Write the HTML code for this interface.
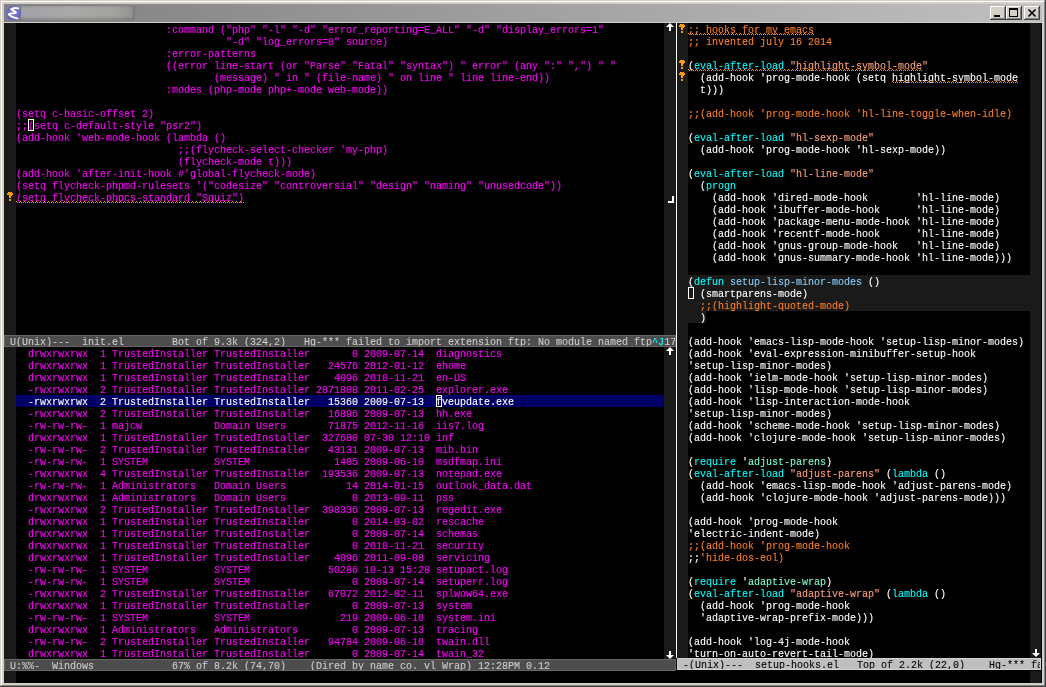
<!DOCTYPE html><html><head><meta charset="utf-8"><style>
html,body{margin:0;padding:0;width:1046px;height:687px;overflow:hidden;background:#d4d0c8}
pre{margin:0}
.t{will-change:transform;-webkit-text-stroke-width:0.1px;position:absolute;font-family:"Liberation Mono",monospace;font-size:10px;line-height:12px;color:#ff00ff;white-space:pre}
.wt{color:#ffffff}
.m{color:#ff00ff}
.hlw{color:#ffffff}
.c{color:#00ffff}
.s{color:#ffa07a}
.f{color:#87cefa}
.k{color:#7fffd4}
.o{color:#ff7f24}
.ml{position:absolute;height:12px;box-sizing:border-box;overflow:hidden}
.mli{background:#4d4d4d;border:1px solid #666666;color:#cccccc}
.mla{background:#bfbfbf;border:1px solid #d2d2d2;color:#000000}
.mlt{will-change:transform;-webkit-text-stroke-width:0.1px;position:absolute;left:-1px;top:1px;font-family:"Liberation Mono",monospace;font-size:10px;line-height:12px;white-space:pre}
</style></head><body><div style="position:absolute;left:0px;top:0px;width:1046px;height:687px;background:#d4d0c8;"></div>
<div style="position:absolute;left:1px;top:1px;width:1044px;height:1px;background:#ffffff;"></div>
<div style="position:absolute;left:1px;top:1px;width:1px;height:685px;background:#ffffff;"></div>
<div style="position:absolute;left:0px;top:686px;width:1046px;height:1px;background:#404040;"></div>
<div style="position:absolute;left:1045px;top:0px;width:1px;height:687px;background:#404040;"></div>
<div style="position:absolute;left:1px;top:685px;width:1044px;height:1px;background:#808080;"></div>
<div style="position:absolute;left:1044px;top:1px;width:1px;height:685px;background:#808080;"></div>
<div style="position:absolute;left:4px;top:4px;width:1038px;height:18px;background:linear-gradient(to right,#808080,#c0c0c0);"></div>
<div style="position:absolute;left:21px;top:6px;width:114px;height:14px;background:linear-gradient(to right,#a2a2a8,#aaaaa8 45%,#a2a2a0 80%,#929290);box-shadow:inset -2px -2px 3px rgba(0,0,0,0.18), inset 0 1px 1px rgba(0,0,0,0.08)"></div>
<svg style="position:absolute;left:5px;top:4px" width="18" height="18" viewBox="0 0 18 18">
<defs><radialGradient id="eg" cx="0.5" cy="0.45" r="0.6"><stop offset="0" stop-color="#8482d0"/><stop offset="0.7" stop-color="#6a68c4"/><stop offset="1" stop-color="#5a58b8"/></radialGradient>
<filter id="eb" x="-20%" y="-20%" width="140%" height="140%"><feGaussianBlur stdDeviation="0.45"/></filter></defs>
<circle cx="8.6" cy="9" r="7.5" fill="url(#eg)"/>
<g filter="url(#eb)">
<path d="M13.2,4.4 C11.5,3.8 8,4.3 6.2,5.2 C7.8,6.6 10.4,7.6 11,8.6 C9.2,9.4 4.8,9.3 3.5,10.2 C5,12.2 9,13.6 12.5,14.4" fill="none" stroke="#ffffff" stroke-width="1.9" stroke-linecap="round" stroke-linejoin="round"/>
</g>
</svg>
<div style="position:absolute;left:990px;top:6px;width:16px;height:14px;background:#404040;"></div><div style="position:absolute;left:990px;top:6px;width:15px;height:13px;background:#ffffff;"></div><div style="position:absolute;left:991px;top:7px;width:14px;height:12px;background:#808080;"></div><div style="position:absolute;left:991px;top:7px;width:13px;height:11px;background:#d4d0c8;"></div><div style="position:absolute;left:994px;top:15px;width:6px;height:2px;background:#000;"></div>
<div style="position:absolute;left:1006px;top:6px;width:16px;height:14px;background:#404040;"></div><div style="position:absolute;left:1006px;top:6px;width:15px;height:13px;background:#ffffff;"></div><div style="position:absolute;left:1007px;top:7px;width:14px;height:12px;background:#808080;"></div><div style="position:absolute;left:1007px;top:7px;width:13px;height:11px;background:#d4d0c8;"></div><div style="position:absolute;left:1009px;top:8px;width:7px;height:6px;border:1px solid #000;border-top-width:2px"></div>
<div style="position:absolute;left:1024px;top:6px;width:16px;height:14px;background:#404040;"></div><div style="position:absolute;left:1024px;top:6px;width:15px;height:13px;background:#ffffff;"></div><div style="position:absolute;left:1025px;top:7px;width:14px;height:12px;background:#808080;"></div><div style="position:absolute;left:1025px;top:7px;width:13px;height:11px;background:#d4d0c8;"></div><svg style="position:absolute;left:1024px;top:6px" width="16" height="14"><path d="M4.5,3.5 L11.5,10.5 M11.5,3.5 L4.5,10.5" stroke="#000" stroke-width="1.6"/></svg>
<div style="position:absolute;left:4px;top:23px;width:1038px;height:660px;background:#000000;"></div>
<div style="position:absolute;left:4px;top:23px;width:12px;height:312px;background:#1a1a1a;"></div>
<div style="position:absolute;left:664px;top:23px;width:12px;height:312px;background:#1a1a1a;"></div>
<div style="position:absolute;left:4px;top:347px;width:12px;height:312px;background:#1a1a1a;"></div>
<div style="position:absolute;left:664px;top:347px;width:12px;height:312px;background:#1a1a1a;"></div>
<div style="position:absolute;left:4px;top:671px;width:12px;height:12px;background:#1a1a1a;"></div>
<div style="position:absolute;left:1030px;top:671px;width:11px;height:12px;background:#1a1a1a;"></div>
<div style="position:absolute;left:676px;top:23px;width:1px;height:635px;background:#ffffff;"></div>
<div style="position:absolute;left:677px;top:23px;width:11px;height:635px;background:#1a1a1a;"></div>
<div style="position:absolute;left:1030px;top:23px;width:11px;height:635px;background:#1a1a1a;"></div>
<div style="position:absolute;left:16px;top:395px;width:648px;height:12px;background:#000066;"></div>
<div style="position:absolute;left:688px;top:275px;width:342px;height:36px;background:#1a1a1a;"></div>
<div style="position:absolute;left:688px;top:311px;width:18px;height:12px;background:#1a1a1a;"></div>
<pre class="t " style="left:16px;top:25px"><span class="m">                         :command ("php" "-l" "-d" "error_reporting=E_ALL" "-d" "display_errors=1"</span>
<span class="m">                                   "-d" "log_errors=0" source)</span>
<span class="m">                         :error-patterns</span>
<span class="m">                         ((error line-start (or "Parse" "Fatal" "syntax") " error" (any ":" ",") " "</span>
<span class="m">                                 (message) " in " (file-name) " on line " line line-end))</span>
<span class="m">                         :modes (php-mode php+-mode web-mode))</span>

<span class="m">(setq c-basic-offset 2)</span>
<span class="m">;;(setq c-default-style "psr2")</span>
<span class="m">(add-hook 'web-mode-hook (lambda ()</span>
<span class="m">                           ;;(flycheck-select-checker 'my-php)</span>
<span class="m">                           (flycheck-mode t)))</span>
<span class="m">(add-hook 'after-init-hook #'global-flycheck-mode)</span>
<span class="m">(setq flycheck-phpmd-rulesets '("codesize" "controversial" "design" "naming" "unusedcode"))</span>
<span class="m">(setq flycheck-phpcs-standard "Squiz")</span></pre>
<pre class="t " style="left:16px;top:349px"><span class="m">  drwxrwxrwx  1 TrustedInstaller TrustedInstaller       0 2009-07-14  diagnostics</span>
<span class="m">  drwxrwxrwx  1 TrustedInstaller TrustedInstaller   24576 2012-01-12  ehome</span>
<span class="m">  drwxrwxrwx  1 TrustedInstaller TrustedInstaller    4096 2010-11-21  en-US</span>
<span class="m">  -rwxrwxrwx  2 TrustedInstaller TrustedInstaller 2871808 2011-02-25  explorer.exe</span>
<span class="hlw">  -rwxrwxrwx  2 TrustedInstaller TrustedInstaller   15360 2009-07-13  fveupdate.exe</span>
<span class="m">  -rwxrwxrwx  2 TrustedInstaller TrustedInstaller   16896 2009-07-13  hh.exe</span>
<span class="m">  -rw-rw-rw-  1 majcw            Domain Users       71875 2012-11-16  iis7.log</span>
<span class="m">  drwxrwxrwx  1 TrustedInstaller TrustedInstaller  327680 07-30 12:10 inf</span>
<span class="m">  -rw-rw-rw-  2 TrustedInstaller TrustedInstaller   43131 2009-07-13  mib.bin</span>
<span class="m">  -rw-rw-rw-  1 SYSTEM           SYSTEM              1405 2009-06-10  msdfmap.ini</span>
<span class="m">  -rwxrwxrwx  4 TrustedInstaller TrustedInstaller  193536 2009-07-13  notepad.exe</span>
<span class="m">  -rw-rw-rw-  1 Administrators   Domain Users          14 2014-01-15  outlook_data.dat</span>
<span class="m">  drwxrwxrwx  1 Administrators   Domain Users           0 2013-09-11  pss</span>
<span class="m">  -rwxrwxrwx  2 TrustedInstaller TrustedInstaller  398336 2009-07-13  regedit.exe</span>
<span class="m">  drwxrwxrwx  1 TrustedInstaller TrustedInstaller       0 2014-03-02  rescache</span>
<span class="m">  drwxrwxrwx  1 TrustedInstaller TrustedInstaller       0 2009-07-14  schemas</span>
<span class="m">  drwxrwxrwx  1 TrustedInstaller TrustedInstaller       0 2010-11-21  security</span>
<span class="m">  drwxrwxrwx  1 TrustedInstaller TrustedInstaller    4096 2011-09-08  servicing</span>
<span class="m">  -rw-rw-rw-  1 SYSTEM           SYSTEM             50286 10-13 15:28 setupact.log</span>
<span class="m">  -rw-rw-rw-  1 SYSTEM           SYSTEM                 0 2009-07-14  setuperr.log</span>
<span class="m">  -rwxrwxrwx  2 TrustedInstaller TrustedInstaller   67072 2012-02-11  splwow64.exe</span>
<span class="m">  drwxrwxrwx  1 TrustedInstaller TrustedInstaller       0 2009-07-13  system</span>
<span class="m">  -rw-rw-rw-  1 SYSTEM           SYSTEM               219 2009-06-10  system.ini</span>
<span class="m">  drwxrwxrwx  1 Administrators   Administrators         0 2009-07-13  tracing</span>
<span class="m">  -rw-rw-rw-  2 TrustedInstaller TrustedInstaller   94784 2009-06-10  twain.dll</span>
<span class="m">  drwxrwxrwx  1 TrustedInstaller TrustedInstaller       0 2009-07-14  twain_32</span></pre>
<pre class="t wt" style="left:688px;top:25px"><span class="o">;; hooks for my emacs</span>
<span class="o">;; invented july 16 2014</span>

(<span class="c">eval-after-load</span> <span class="s">"highlight-symbol-mode"</span>
  (add-hook 'prog-mode-hook (setq highlight-symbol-mode
  t)))

<span class="o">;;(add-hook 'prog-mode-hook 'hl-line-toggle-when-idle)</span>

(<span class="c">eval-after-load</span> <span class="s">"hl-sexp-mode"</span>
  (add-hook 'prog-mode-hook 'hl-sexp-mode))

(<span class="c">eval-after-load</span> <span class="s">"hl-line-mode"</span>
  (<span class="c">progn</span>
    (add-hook 'dired-mode-hook        'hl-line-mode)
    (add-hook 'ibuffer-mode-hook      'hl-line-mode)
    (add-hook 'package-menu-mode-hook 'hl-line-mode)
    (add-hook 'recentf-mode-hook      'hl-line-mode)
    (add-hook 'gnus-group-mode-hook   'hl-line-mode)
    (add-hook 'gnus-summary-mode-hook 'hl-line-mode)))

(<span class="c">defun</span> <span class="f">setup-lisp-minor-modes</span> ()
  (smartparens-mode)
  <span class="o">;;(highlight-quoted-mode)</span>
  )

(add-hook 'emacs-lisp-mode-hook 'setup-lisp-minor-modes)
(add-hook 'eval-expression-minibuffer-setup-hook
'setup-lisp-minor-modes)
(add-hook 'ielm-mode-hook 'setup-lisp-minor-modes)
(add-hook 'lisp-mode-hook 'setup-lisp-minor-modes)
(add-hook 'lisp-interaction-mode-hook
'setup-lisp-minor-modes)
(add-hook 'scheme-mode-hook 'setup-lisp-minor-modes)
(add-hook 'clojure-mode-hook 'setup-lisp-minor-modes)

(<span class="c">require</span> '<span class="k">adjust-parens</span>)
(<span class="c">eval-after-load</span> <span class="s">"adjust-parens"</span> (<span class="c">lambda</span> ()
  (add-hook 'emacs-lisp-mode-hook 'adjust-parens-mode)
  (add-hook 'clojure-mode-hook 'adjust-parens-mode)))

(add-hook 'prog-mode-hook
'electric-indent-mode)
<span class="o">;;(add-hook 'prog-mode-hook</span>
;;<span class="o">'hide-dos-eol)</span>

(<span class="c">require</span> '<span class="k">adaptive-wrap</span>)
(<span class="c">eval-after-load</span> <span class="s">"adaptive-wrap"</span> (<span class="c">lambda</span> ()
  (add-hook 'prog-mode-hook
  'adaptive-wrap-prefix-mode)))

(add-hook 'log-4j-mode-hook
'turn-on-auto-revert-tail-mode)</pre>
<div class="ml mli" style="left:4px;top:335px;width:672px"><pre class="mlt"> U(Unix)---  init.el        Bot of 9.3k (324,2)   Hg-*** failed to import extension ftp: No module named ftp<span class="c">^J</span>17</pre></div>
<div class="ml mli" style="left:4px;top:659px;width:672px"><pre class="mlt"> U:%%-  Windows             67% of 8.2k (74,70)    (Dired by name co. vl Wrap) 12:28PM 0.12</pre></div>
<div class="ml mla" style="left:677px;top:658px;width:364px"><pre class="mlt"> -(Unix)---  setup-hooks.el   Top of 2.2k (22,0)    Hg-*** fa</pre></div>
<div style="position:absolute;left:28px;top:119px;width:4px;height:10px;border:1px solid #fff"></div>
<div style="position:absolute;left:436px;top:395px;width:4px;height:10px;border:1px solid #fff"></div>
<div style="position:absolute;left:688px;top:287px;width:4px;height:10px;border:1px solid #fff"></div>
<svg style="position:absolute;left:16px;top:201px" width="228" height="2" shape-rendering="crispEdges"><defs><pattern id="wv16_201" x="0" width="4" height="2" patternUnits="userSpaceOnUse"><rect x="0" y="0" width="1" height="1" fill="#ff9000"/><rect x="1" y="1" width="1" height="1" fill="#ff9000"/><rect x="3" y="1" width="1" height="1" fill="#ff9000"/></pattern></defs><rect width="228" height="2" fill="url(#wv16_201)"/></svg>
<svg style="position:absolute;left:688px;top:33px" width="126" height="2" shape-rendering="crispEdges"><defs><pattern id="wv688_33" x="0" width="4" height="2" patternUnits="userSpaceOnUse"><rect x="0" y="0" width="1" height="1" fill="#ff9000"/><rect x="1" y="1" width="1" height="1" fill="#ff9000"/><rect x="3" y="1" width="1" height="1" fill="#ff9000"/></pattern></defs><rect width="126" height="2" fill="url(#wv688_33)"/></svg>
<svg style="position:absolute;left:688px;top:69px" width="234" height="2" shape-rendering="crispEdges"><defs><pattern id="wv688_69" x="0" width="4" height="2" patternUnits="userSpaceOnUse"><rect x="0" y="0" width="1" height="1" fill="#ff9000"/><rect x="1" y="1" width="1" height="1" fill="#ff9000"/><rect x="3" y="1" width="1" height="1" fill="#ff9000"/></pattern></defs><rect width="234" height="2" fill="url(#wv688_69)"/></svg>
<svg style="position:absolute;left:892px;top:81px" width="126" height="2" shape-rendering="crispEdges"><defs><pattern id="wv892_81" x="0" width="4" height="2" patternUnits="userSpaceOnUse"><rect x="0" y="0" width="1" height="1" fill="#ff9000"/><rect x="1" y="1" width="1" height="1" fill="#ff9000"/><rect x="3" y="1" width="1" height="1" fill="#ff9000"/></pattern></defs><rect width="126" height="2" fill="url(#wv892_81)"/></svg>
<svg style="position:absolute;left:6px;top:191px" width="8" height="11"><rect x="2" y="1" width="1" height="1" fill="#ff9a00"/><rect x="3" y="1" width="1" height="1" fill="#ff9a00"/><rect x="4" y="1" width="1" height="1" fill="#ff9a00"/><rect x="5" y="1" width="1" height="1" fill="#ff9a00"/><rect x="1" y="2" width="1" height="1" fill="#ff9a00"/><rect x="2" y="2" width="1" height="1" fill="#ff9a00"/><rect x="3" y="2" width="1" height="1" fill="#ff9a00"/><rect x="4" y="2" width="1" height="1" fill="#ff9a00"/><rect x="5" y="2" width="1" height="1" fill="#ff9a00"/><rect x="6" y="2" width="1" height="1" fill="#ff9a00"/><rect x="1" y="3" width="1" height="1" fill="#ff9a00"/><rect x="2" y="3" width="1" height="1" fill="#ff9a00"/><rect x="3" y="3" width="1" height="1" fill="#ff9a00"/><rect x="4" y="3" width="1" height="1" fill="#ff9a00"/><rect x="5" y="3" width="1" height="1" fill="#ff9a00"/><rect x="6" y="3" width="1" height="1" fill="#ff9a00"/><rect x="3" y="4" width="1" height="1" fill="#ff9a00"/><rect x="4" y="4" width="1" height="1" fill="#ff9a00"/><rect x="5" y="4" width="1" height="1" fill="#ff9a00"/><rect x="3" y="5" width="1" height="1" fill="#ff9a00"/><rect x="4" y="5" width="1" height="1" fill="#ff9a00"/><rect x="3" y="6" width="1" height="1" fill="#ff9a00"/><rect x="4" y="6" width="1" height="1" fill="#ff9a00"/><rect x="3" y="8" width="1" height="1" fill="#ff9a00"/><rect x="4" y="8" width="1" height="1" fill="#ff9a00"/><rect x="3" y="9" width="1" height="1" fill="#ff9a00"/><rect x="4" y="9" width="1" height="1" fill="#ff9a00"/></svg>
<svg style="position:absolute;left:678px;top:23px" width="8" height="11"><rect x="2" y="1" width="1" height="1" fill="#ff9a00"/><rect x="3" y="1" width="1" height="1" fill="#ff9a00"/><rect x="4" y="1" width="1" height="1" fill="#ff9a00"/><rect x="5" y="1" width="1" height="1" fill="#ff9a00"/><rect x="1" y="2" width="1" height="1" fill="#ff9a00"/><rect x="2" y="2" width="1" height="1" fill="#ff9a00"/><rect x="3" y="2" width="1" height="1" fill="#ff9a00"/><rect x="4" y="2" width="1" height="1" fill="#ff9a00"/><rect x="5" y="2" width="1" height="1" fill="#ff9a00"/><rect x="6" y="2" width="1" height="1" fill="#ff9a00"/><rect x="1" y="3" width="1" height="1" fill="#ff9a00"/><rect x="2" y="3" width="1" height="1" fill="#ff9a00"/><rect x="3" y="3" width="1" height="1" fill="#ff9a00"/><rect x="4" y="3" width="1" height="1" fill="#ff9a00"/><rect x="5" y="3" width="1" height="1" fill="#ff9a00"/><rect x="6" y="3" width="1" height="1" fill="#ff9a00"/><rect x="3" y="4" width="1" height="1" fill="#ff9a00"/><rect x="4" y="4" width="1" height="1" fill="#ff9a00"/><rect x="5" y="4" width="1" height="1" fill="#ff9a00"/><rect x="3" y="5" width="1" height="1" fill="#ff9a00"/><rect x="4" y="5" width="1" height="1" fill="#ff9a00"/><rect x="3" y="6" width="1" height="1" fill="#ff9a00"/><rect x="4" y="6" width="1" height="1" fill="#ff9a00"/><rect x="3" y="8" width="1" height="1" fill="#ff9a00"/><rect x="4" y="8" width="1" height="1" fill="#ff9a00"/><rect x="3" y="9" width="1" height="1" fill="#ff9a00"/><rect x="4" y="9" width="1" height="1" fill="#ff9a00"/></svg>
<svg style="position:absolute;left:678px;top:59px" width="8" height="11"><rect x="2" y="1" width="1" height="1" fill="#ff9a00"/><rect x="3" y="1" width="1" height="1" fill="#ff9a00"/><rect x="4" y="1" width="1" height="1" fill="#ff9a00"/><rect x="5" y="1" width="1" height="1" fill="#ff9a00"/><rect x="1" y="2" width="1" height="1" fill="#ff9a00"/><rect x="2" y="2" width="1" height="1" fill="#ff9a00"/><rect x="3" y="2" width="1" height="1" fill="#ff9a00"/><rect x="4" y="2" width="1" height="1" fill="#ff9a00"/><rect x="5" y="2" width="1" height="1" fill="#ff9a00"/><rect x="6" y="2" width="1" height="1" fill="#ff9a00"/><rect x="1" y="3" width="1" height="1" fill="#ff9a00"/><rect x="2" y="3" width="1" height="1" fill="#ff9a00"/><rect x="3" y="3" width="1" height="1" fill="#ff9a00"/><rect x="4" y="3" width="1" height="1" fill="#ff9a00"/><rect x="5" y="3" width="1" height="1" fill="#ff9a00"/><rect x="6" y="3" width="1" height="1" fill="#ff9a00"/><rect x="3" y="4" width="1" height="1" fill="#ff9a00"/><rect x="4" y="4" width="1" height="1" fill="#ff9a00"/><rect x="5" y="4" width="1" height="1" fill="#ff9a00"/><rect x="3" y="5" width="1" height="1" fill="#ff9a00"/><rect x="4" y="5" width="1" height="1" fill="#ff9a00"/><rect x="3" y="6" width="1" height="1" fill="#ff9a00"/><rect x="4" y="6" width="1" height="1" fill="#ff9a00"/><rect x="3" y="8" width="1" height="1" fill="#ff9a00"/><rect x="4" y="8" width="1" height="1" fill="#ff9a00"/><rect x="3" y="9" width="1" height="1" fill="#ff9a00"/><rect x="4" y="9" width="1" height="1" fill="#ff9a00"/></svg>
<svg style="position:absolute;left:678px;top:71px" width="8" height="11"><rect x="2" y="1" width="1" height="1" fill="#ff9a00"/><rect x="3" y="1" width="1" height="1" fill="#ff9a00"/><rect x="4" y="1" width="1" height="1" fill="#ff9a00"/><rect x="5" y="1" width="1" height="1" fill="#ff9a00"/><rect x="1" y="2" width="1" height="1" fill="#ff9a00"/><rect x="2" y="2" width="1" height="1" fill="#ff9a00"/><rect x="3" y="2" width="1" height="1" fill="#ff9a00"/><rect x="4" y="2" width="1" height="1" fill="#ff9a00"/><rect x="5" y="2" width="1" height="1" fill="#ff9a00"/><rect x="6" y="2" width="1" height="1" fill="#ff9a00"/><rect x="1" y="3" width="1" height="1" fill="#ff9a00"/><rect x="2" y="3" width="1" height="1" fill="#ff9a00"/><rect x="3" y="3" width="1" height="1" fill="#ff9a00"/><rect x="4" y="3" width="1" height="1" fill="#ff9a00"/><rect x="5" y="3" width="1" height="1" fill="#ff9a00"/><rect x="6" y="3" width="1" height="1" fill="#ff9a00"/><rect x="3" y="4" width="1" height="1" fill="#ff9a00"/><rect x="4" y="4" width="1" height="1" fill="#ff9a00"/><rect x="5" y="4" width="1" height="1" fill="#ff9a00"/><rect x="3" y="5" width="1" height="1" fill="#ff9a00"/><rect x="4" y="5" width="1" height="1" fill="#ff9a00"/><rect x="3" y="6" width="1" height="1" fill="#ff9a00"/><rect x="4" y="6" width="1" height="1" fill="#ff9a00"/><rect x="3" y="8" width="1" height="1" fill="#ff9a00"/><rect x="4" y="8" width="1" height="1" fill="#ff9a00"/><rect x="3" y="9" width="1" height="1" fill="#ff9a00"/><rect x="4" y="9" width="1" height="1" fill="#ff9a00"/></svg>
<svg style="position:absolute;left:666px;top:23px" width="8" height="8"><path d="M4,0 L8,4 L5,4 L5,8 L3,8 L3,4 L0,4 Z" fill="#fff"/></svg>
<svg style="position:absolute;left:666px;top:347px" width="8" height="8"><path d="M4,0 L8,4 L5,4 L5,8 L3,8 L3,4 L0,4 Z" fill="#fff"/></svg>
<svg style="position:absolute;left:666px;top:651px" width="8" height="8"><path d="M3,0 L5,0 L5,4 L8,4 L4,8 L0,4 L3,4 Z" fill="#fff"/></svg>
<svg style="position:absolute;left:1032px;top:649px" width="8" height="8"><path d="M3,0 L5,0 L5,4 L8,4 L4,8 L0,4 L3,4 Z" fill="#fff"/></svg>
<div style="position:absolute;left:672px;top:196px;width:2px;height:7px;background:#fff;"></div>
<div style="position:absolute;left:668px;top:201px;width:6px;height:2px;background:#fff;"></div></body></html>
